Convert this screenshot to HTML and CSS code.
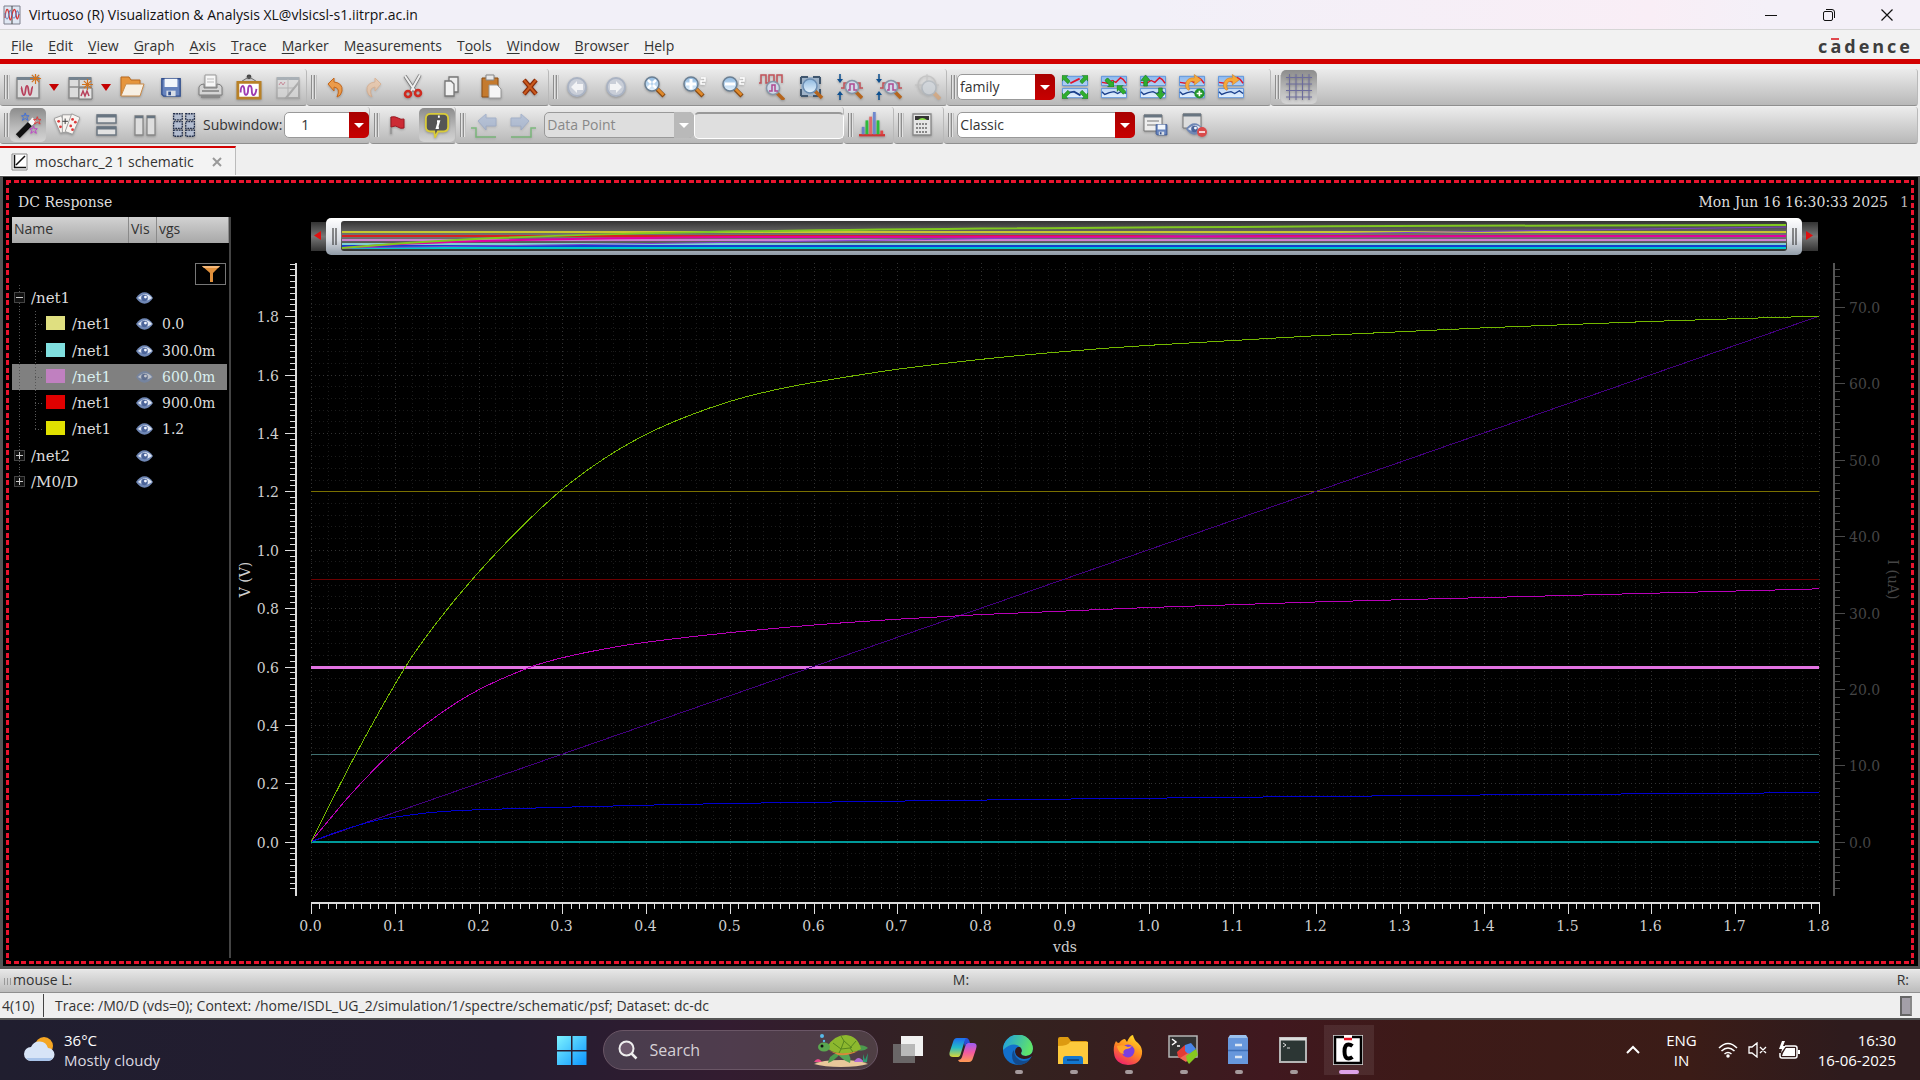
FILE: index.html
```html
<!DOCTYPE html>
<html lang="en">
<head>
<meta charset="utf-8">
<title>Virtuoso (R) Visualization &amp; Analysis XL</title>
<link rel="stylesheet" href="styles.css">
</head>
<body>
<svg class="defs" aria-hidden="true">
  <defs>
    <linearGradient id="lens" x1="0" y1="0" x2="0" y2="1"><stop offset="0" stop-color="#8fb9e0"/><stop offset="1" stop-color="#e6f3fd"/></linearGradient>
    <linearGradient id="pane" x1="0" y1="0" x2="0" y2="1"><stop offset="0" stop-color="#8db8ee"/><stop offset="1" stop-color="#e4f0fd"/></linearGradient>
    <symbol id="mag" viewBox="0 0 26 26"><path d="M15 15l7 7" stroke="#8a4a10" stroke-width="4.5"/><path d="M15.500 15l6 6" stroke="#e08a2c" stroke-width="2.500"/><circle cx="10" cy="10" r="7" fill="url(#lens)" stroke="#6b7f92" stroke-width="1.500"/></symbol>
    <symbol id="zoomaxis" viewBox="0 0 26 26"><path d="M3 0v7M3 26v-7" stroke="#0d4f8f" stroke-width="1.500"/><path d="M0 5h6l-3 4zM0 21h6l-3-4z" fill="#0d4f8f"/><path d="M4 14h3V9h16v5h3" fill="none" stroke="#c25158" stroke-width="1.500"/><path d="M18 17l7 7" stroke="#b5651d" stroke-width="3.500"/><circle cx="15" cy="13" r="6.500" fill="#cfd9e8" stroke="#8796a8" stroke-width="1.500"/><path d="M11 16h2v-6h4v6h3" fill="none" stroke="#b04a90" stroke-width="1.500"/></symbol>
    <symbol id="eye" viewBox="0 0 18 12"><path d="M0 6q4-6 9-6t9 6q-4 6-9 6T0 6z" fill="#6f87b5"/><path d="M2 6q4-4 8-4t7 4q-4 3-7 3T2 6z" fill="#dfe6f3"/><circle cx="9" cy="6" r="3.500" fill="#4c659a"/><circle cx="10" cy="5" r="1.500" fill="#f4f7ff"/></symbol>
    <symbol id="spark" viewBox="0 0 12 12"><path d="M6 0v12M0 6h12M2 2l8 8M10 2l-8 8" stroke="#d1731f" stroke-width="1.300"/></symbol>
    <symbol id="panes" viewBox="0 0 28 26"><path d="M.5 1.500h27v10H.5zM.5 14.500h27v10H.5z" fill="url(#pane)" stroke="#5c93dc"/></symbol>
    <symbol id="traces" viewBox="0 0 28 26"><use href="#panes" width="28" height="26"/><path d="M1 8l6 1 5-3 4 2 5-5 3 2 3 4" fill="none" stroke="#e0142c" stroke-width="1.500"/><path d="M1 18l3 3 5-2 5-1 4 2 5-3 4 3" fill="none" stroke="#1a3f8c" stroke-width="1.500"/></symbol>
    <symbol id="garrow" viewBox="0 0 10 10"><path d="M0 0h7L5 2l5 5-3 3-5-5-2 2z" fill="#2fae2f" stroke="#14701a" stroke-width=".6"/></symbol>
    <symbol id="disk" viewBox="0 0 24 24"><path d="M2 3h20v19H4l-2-2z" fill="#6683bd" stroke="#324f8d" stroke-width="1.500"/><path d="M5 3h14v9H5z" fill="#f2f6fb"/><path d="M7 16h10v6H7z" fill="#d7dde6"/><path d="M9 17h3v4H9z" fill="#324f8d"/></symbol>
    <symbol id="round" viewBox="0 0 26 26"><circle cx="13" cy="13" r="9" fill="#c9ced8" stroke="#aab3c3" stroke-width="2"/><path d="M7 13l6-6v3h6v6h-6v3z" fill="#f2f3f5"/></symbol>
    <symbol id="win" viewBox="0 0 26 26"><path d="M2 4h22v20H2z" fill="#dcdcdc" stroke="#8c8c8c" stroke-width="1.500"/><path d="M2 3h22v3H2z" fill="#75838f"/></symbol>
    <symbol id="loop" viewBox="0 0 20 20"><path d="M4 18Q-1 14 2 8 5 3 11 4V0l8 6-8 6V8Q6 7 5 11q-1 3 1 6z" fill="#f5a93c" stroke="#cf7b18" stroke-width=".6"/></symbol>
  </defs>
</svg>

<header class="titlebar">
  <svg width="18" height="20" viewBox="0 0 18 20"><path d="M1 1h16v18H1z" fill="#dfe7f3" stroke="#7d7f8c"/><path d="M9 1v18" stroke="#444"/><path d="M2 13c1-11 3-11 4-3s2 5 3 0 3-9 4-1 2 5 3 0" fill="none" stroke="#d53535" stroke-width="1.200"/><path d="M2 8c1 8 3 8 4 1s2-3 3 1 3 5 4-1 2-3 3 1" fill="none" stroke="#5b79b5"/></svg>
  <h1 class="titlebar-text">Virtuoso (R) Visualization &amp; Analysis XL@vlsicsl-s1.iitrpr.ac.in</h1>
  <div class="win-controls">
    <button aria-label="Minimize"><svg width="14" height="14"><path d="M1 7.500h12" stroke="#111"/></svg></button>
    <button aria-label="Restore"><svg width="14" height="14" fill="none" stroke="#111"><rect x="1.500" y="3.500" width="9" height="9" rx="1.500"/><path d="M4 1.500h6q2.500 0 2.500 2.500v6"/></svg></button>
    <button aria-label="Close"><svg width="14" height="14"><path d="M1.500 1.500l11 11m0-11l-11 11" stroke="#111" stroke-width="1.200"/></svg></button>
  </div>
</header>

<nav class="menubar">
  <button><u>F</u>ile</button><button><u>E</u>dit</button><button><u>V</u>iew</button><button><u>G</u>raph</button><button><u>A</u>xis</button><button><u>T</u>race</button><button><u>M</u>arker</button><button>M<u>e</u>asurements</button><button>T<u>o</u>ols</button><button><u>W</u>indow</button><button><u>B</u>rowser</button><button><u>H</u>elp</button>
  <span class="brand">c<span class="brand-a">a</span>dence</span>
</nav>

<div class="toolbars">
  <div class="toolbar">
    <div class="group">
      <i class="grip"></i>
      <div class="tight">
        <button class="tool" aria-label="New window"><svg viewBox="0 0 26 26"><use href="#win"/><path d="M6 13c1 0 1 8 3 8s1-9 3-9 1 9 3 9 1-8 3-8" fill="none" stroke="#b8415c" stroke-width="1.800"/><use href="#spark" x="15" y="-1" width="11" height="11"/></svg></button>
        <button class="caret" aria-label="New window options"></button>
        <button class="tool" aria-label="New subwindow"><svg viewBox="0 0 26 26"><use href="#win"/><path d="M2 13h22M12 5v19" stroke="#8c8c8c" stroke-width="1.500"/><path d="M12 14h13v11H12z" fill="#e4e4e4" stroke="#777"/><path d="M14 22l2-5 2 5 2-5 2 5" fill="none" stroke="#b8415c" stroke-width="1.500"/><use href="#spark" x="15" y="5" width="11" height="11"/></svg></button>
        <button class="caret" aria-label="New subwindow options"></button>
        <button class="tool" aria-label="Open"><svg viewBox="0 0 26 26"><path d="M2 22V3h8l2 3h9v5" fill="#e6953c" stroke="#b9691c"/><path d="M2 22l5-12h18l-4 12z" fill="#f7efe3" stroke="#c88b4b"/></svg></button>
      </div>
      <button class="tool" aria-label="Save"><svg viewBox="0 0 26 26"><use href="#disk" x="2" y="2" width="22" height="22"/></svg></button>
      <button class="tool" aria-label="Print"><svg viewBox="0 0 26 26"><path d="M8 1h11v12H8z" fill="#f7f7f7" stroke="#9a9a9a"/><path d="M10 5h7M10 8h7" stroke="#bbb"/><path d="M2 13q1-3 5-3v4h13v-4q4 0 5 3v8H2z" fill="#d4d4d4" stroke="#7d7d7d"/><path d="M4 21h19v3H4z" fill="#888"/><path d="M5 17h17" stroke="#555"/></svg></button>
      <button class="tool" aria-label="Save image"><svg viewBox="0 0 28 28"><circle cx="14" cy="3" r="2.500" fill="#444"/><path d="M6 8l8-5 8 5" fill="none" stroke="#666"/><path d="M2 9h24v17H2z" fill="#fff" stroke="#b88127" stroke-width="3"/><path d="M5 20c0-9 4-9 4-2s4 5 4-1 4-6 4 1 4 6 5-2" fill="none" stroke="#9d3bb0" stroke-width="2"/></svg></button>
      <button class="tool dim" aria-label="Edit template"><svg viewBox="0 0 26 26"><use href="#win"/><path d="M2 14h22M13 5v19" stroke="#999"/><path d="M4 11l2-3 2 3 2-3" fill="none" stroke="#b8415c"/><path d="M11 24L24 8v16z" fill="#ddd" stroke="#888" stroke-width="2"/></svg></button>
    </div>
    <div class="group">
      <i class="grip"></i>
      <button class="tool" aria-label="Undo"><svg viewBox="0 0 26 26"><path d="M6 10l6-6v4q9 1 8 9-1 5-5 6 4-9-3-10v4z" fill="#eb9b4b" stroke="#c4661a"/></svg></button>
      <button class="tool dim" aria-label="Redo"><svg viewBox="0 0 26 26"><path d="M20 10l-6-6v4q-9 1-8 9 1 5 5 6-4-9 3-10v4z" fill="#f2b988" stroke="#d6905a"/></svg></button>
      <button class="tool" aria-label="Cut"><svg viewBox="0 0 26 26"><path d="M5 2l10 15M20 1L11 17" stroke="#777" stroke-width="3.500"/><path d="M5 2l10 15M20 1L11 17" stroke="#eee" stroke-width="2"/><circle cx="8" cy="20" r="3" fill="none" stroke="#cf2a1f" stroke-width="2.500"/><circle cx="18" cy="19" r="3" fill="none" stroke="#cf2a1f" stroke-width="2.500"/></svg></button>
      <button class="tool" aria-label="Copy"><svg viewBox="0 0 26 26"><path d="M10 3h9v15h-9z" fill="#eee" stroke="#777" stroke-width="1.300"/><path d="M6 7h6l3 3v12H6z" fill="#f2f2f2" stroke="#777" stroke-width="1.300"/></svg></button>
      <button class="tool" aria-label="Paste"><svg viewBox="0 0 26 26"><path d="M4 4h16v19H4z" fill="#c47a2e" stroke="#8a4c12"/><path d="M8 1h8v5H8z" fill="#e8e8e8" stroke="#888"/><path d="M11 11h8l4 4v9H11z" fill="#f5f5f5" stroke="#999"/></svg></button>
      <button class="tool" aria-label="Delete"><svg viewBox="0 0 26 26"><path d="M7 6l12 14M19 6L7 20" stroke="#8a2b08" stroke-width="4.500"/><path d="M7 6l12 14M19 6L7 20" stroke="#c95a1e" stroke-width="2"/></svg></button>
    </div>
    <div class="group">
      <i class="grip"></i>
      <button class="tool" aria-label="Back"><svg viewBox="0 0 26 26"><use href="#round"/></svg></button>
      <button class="tool" aria-label="Forward"><svg viewBox="0 0 26 26"><use href="#round" transform="matrix(-1 0 0 1 26 0)"/></svg></button>
      <button class="tool" aria-label="Fit"><svg viewBox="0 0 26 26"><use href="#mag"/><path d="M6 6l3 3M14 6l-3 3M6 14l3-3M14 14l-3-3" stroke="#fff" stroke-width="2.500"/></svg></button>
      <button class="tool" aria-label="Zoom in by 2"><svg viewBox="0 0 26 26"><use href="#mag"/><path d="M5 10h10M10 5v10" stroke="#fff" stroke-width="3"/><path d="M20 4h4v3h-4v3h4" fill="none" stroke="#fff" stroke-width="1.500"/></svg></button>
      <button class="tool" aria-label="Zoom out by 2"><svg viewBox="0 0 26 26"><use href="#mag"/><path d="M5 10h10" stroke="#fff" stroke-width="3"/><path d="M20 4h4v3h-4v3h4" fill="none" stroke="#fff" stroke-width="1.500"/></svg></button>
      <button class="tool" aria-label="Zoom X"><svg viewBox="0 0 26 26"><path d="M0 9h2V1h5v8h3V1h5v8h3V1h5v8" fill="none" stroke="#c25158" stroke-width="1.500"/><path d="M18 19l7 7" stroke="#b5651d" stroke-width="3.500"/><circle cx="14" cy="14" r="6.500" fill="#cfd9e8" stroke="#8796a8" stroke-width="1.500"/><path d="M10 17h3v-6h3v6h3" fill="none" stroke="#b04a90" stroke-width="1.500"/></svg></button>
      <button class="tool" aria-label="Zoom area"><svg viewBox="0 0 26 26"><path d="M3 3h19v19H3z" fill="#9fb3c8" stroke="#40566e" stroke-width="2" stroke-dasharray="7 5 7 0"/><path d="M17 17l7 7" stroke="#b5651d" stroke-width="3.500"/><circle cx="12" cy="12" r="7" fill="url(#lens)" stroke="#6b8db2" stroke-width="1.500"/></svg></button>
      <button class="tool" aria-label="Zoom Y"><svg viewBox="0 0 26 26"><use href="#zoomaxis"/></svg></button>
      <button class="tool" aria-label="Zoom Y at cursor"><svg viewBox="0 0 26 26"><use href="#zoomaxis"/></svg></button>
      <button class="tool dim" aria-label="Zoom target"><svg viewBox="0 0 26 26"><path d="M18 18l7 7" stroke="#d98e4c" stroke-width="4"/><circle cx="12" cy="11" r="9" fill="none" stroke="#aaa" stroke-width="1.500"/><path d="M12 0v22M0 11h24" stroke="#aaa"/><circle cx="14" cy="14" r="7" fill="#cdd5de" stroke="#9aa5b0" stroke-width="1.500"/></svg></button>
    </div>
    <div class="group wide">
      <i class="grip"></i>
      <span class="combo combo-family"><select aria-label="Strip by"><option>family</option></select></span>
      <button class="tool" aria-label="Strip chart"><svg viewBox="0 0 28 26"><use href="#panes"/><path d="M9 9l10-5" stroke="#e0142c" stroke-width="2"/><path d="M7 19l6-1 7 4" stroke="#1a3f8c" stroke-width="2" fill="none"/><use href="#garrow" x="0" y="0" width="9" height="10"/><use href="#garrow" width="9" height="10" transform="matrix(-1 0 0 1 28 0)"/><use href="#garrow" width="9" height="10" transform="matrix(1 0 0 -1 0 26)"/><use href="#garrow" width="9" height="10" transform="matrix(-1 0 0 -1 28 26)"/></svg></button>
      <button class="tool" aria-label="Combine traces"><svg viewBox="0 0 28 26"><use href="#traces"/><use href="#garrow" width="10" height="10" transform="matrix(-1 0 0 -1 14 13)"/><use href="#garrow" x="17" y="11" width="10" height="10"/></svg></button>
      <button class="tool" aria-label="Move trace"><svg viewBox="0 0 28 26"><use href="#traces"/><path d="M6 0l5 6H8v6H4V6H1zM22 26l5-6h-3v-6h-4v6h-3z" fill="#2fae2f" stroke="#14701a" stroke-width=".6"/></svg></button>
      <button class="tool" aria-label="Reload and add"><svg viewBox="0 0 28 26"><use href="#traces"/><use href="#loop" x="6" y="-1" width="19" height="20"/><circle cx="22" cy="20" r="5.500" fill="#23962b"/><path d="M19 20h6M22 17v6" stroke="#fff" stroke-width="1.800"/></svg></button>
      <button class="tool" aria-label="Reload"><svg viewBox="0 0 28 26"><use href="#traces"/><use href="#loop" x="5" y="-1" width="19" height="20"/></svg></button>
    </div>
    <div class="group rest">
      <i class="grip"></i>
      <button class="tool on" aria-label="Toggle grid"><svg viewBox="0 0 26 26"><path d="M3.500 0v26M10 0v26M16.500 0v26M23 0v26M0 3.500h26M0 10h26M0 16.500h26M0 23h26" stroke="#6d6d9c"/></svg></button>
    </div>
  </div>

  <div class="toolbar">
    <div class="group">
      <i class="grip"></i>
      <button class="tool on" aria-label="Wizard"><svg viewBox="0 0 28 28"><path d="M3 26L19 10" stroke="#111" stroke-width="6"/><path d="M16 13l5-5" stroke="#f5f5f5" stroke-width="6"/><path d="M11 1l1 3h3l-2 2 1 3-3-2-3 2 1-3-2-2h3z" fill="none" stroke="#3c6fe0"/><path d="M24 5l1 3h3l-2 2 1 3-3-2-3 2 1-3-2-2h3z" fill="none" stroke="#e03a3a"/><path d="M20 15l1 3h3l-2 2 1 3-3-2-3 2 1-3-2-2h3z" fill="none" stroke="#c040c8"/></svg></button>
      <button class="tool" aria-label="Cards"><svg viewBox="0 0 28 26"><g fill="#f8f5f2" stroke="#999"><path d="M0 6l8-3 6 16-7 3z"/><path d="M9 2h10v19H9z"/><path d="M19 1l9 4-8 18-8-3z"/></g><g fill="#dc3b3b"><circle cx="5" cy="9" r="1.500"/><circle cx="7" cy="15" r="1.500"/><circle cx="20" cy="7" r="1.500"/><circle cx="23" cy="10" r="1.500"/><circle cx="18" cy="14" r="1.500"/><circle cx="20" cy="18" r="1.500"/></g><path d="M12 6v6M9 9h6" stroke="#333"/></svg></button>
      <button class="tool" aria-label="Horizontal layout"><svg viewBox="0 0 26 26"><path d="M4 3h19v8H4zM4 15h19v8H4z" fill="#e2e2e2" stroke="#6d7882" stroke-width="1.500"/><path d="M4 4h19M4 16h19" stroke="#687581" stroke-width="3"/></svg></button>
      <button class="tool" aria-label="Vertical layout"><svg viewBox="0 0 26 26"><path d="M3 4h8v19H3zM15 4h8v19h-8z" fill="#dedede" stroke="#888" stroke-width="1.300"/><path d="M3 5h8M15 5h8" stroke="#687581" stroke-width="2.500"/></svg></button>
      <button class="tool" aria-label="Card grid"><svg viewBox="0 0 28 30"><path d="M2 2h10v7H2zM16 2h10v7H16zM2 11h10v8H2zM16 11h10v8H16zM2 21h10v7H2zM16 21h10v7H16z" fill="#b3bdd0" stroke="#222e4a" stroke-width="1.500" stroke-dasharray="2 1"/></svg></button>
      <div class="field"><label for="subwin">Subwindow:</label><span class="combo combo-sub"><select id="subwin"><option>1</option></select></span></div>
    </div>
    <div class="group">
      <i class="grip"></i>
      <button class="tool" aria-label="Flag"><svg viewBox="0 0 26 26"><path d="M6 5v17" stroke="#999" stroke-width="2"/><path d="M6 5q4-1 7 1t6 1v9q-4 1-6-1t-7 0z" fill="#cc2b35" stroke="#9c1720"/></svg></button>
      <button class="tool on" aria-label="Info"><svg viewBox="0 0 28 28"><path d="M7 2h14q5 0 5 5v9q0 5-5 5h-6l-3 6-1-6H7q-5 0-5-5V7q0-5 5-5z" fill="#555" stroke="#d9cb3a" stroke-width="2"/><path d="M15 5h2M14 10h2l-2 7h2" stroke="#fff" stroke-width="2.500" fill="none"/></svg></button>
    </div>
    <div class="group">
      <i class="grip"></i>
      <button class="tool dim" aria-label="Previous edge"><svg viewBox="0 0 26 26"><path d="M7 9l8-7v4h10v8H15v4z" fill="#8ea6cf" stroke="#6f88b8"/><path d="M0 16h5v9h20" fill="none" stroke="#2fa52f" stroke-width="1.500"/></svg></button>
      <button class="tool dim" aria-label="Next edge"><svg viewBox="0 0 26 26"><path d="M19 9l-8-7v4H1v8h10v4z" fill="#8ea6cf" stroke="#6f88b8"/><path d="M26 16h-5v9H1" fill="none" stroke="#2fa52f" stroke-width="1.500"/></svg></button>
      <div class="pair"><span class="combo combo-point off"><select aria-label="Search type" disabled><option>Data Point</option></select></span><input class="value" type="text" aria-label="Search value" disabled></div>
    </div>
    <div class="group single">
      <i class="grip"></i>
      <button class="tool" aria-label="Histogram"><svg viewBox="0 0 28 28"><path d="M0 25h28" stroke="#d03636" stroke-width="2.500"/><path d="M3 16h3v8H3z" fill="#6b82c8"/><path d="M7 9h3v15H7z" fill="#2dbb3b"/><path d="M11 5h3v19h-3z" fill="#e06a6a"/><path d="M15 0h3v24h-3z" fill="#6f88cf"/><path d="M19 9h3v15h-3z" fill="#2dbb3b"/><path d="M23 20h3v4h-3z" fill="#e04848"/></svg></button>
    </div>
    <div class="group single">
      <i class="grip"></i>
      <button class="tool" aria-label="Calculator"><svg viewBox="0 0 26 26"><path d="M4 2h18v21H4z" fill="#e6e6e6" stroke="#888" stroke-width="1.300"/><path d="M6 4h14v4H6z" fill="#333"/><path d="M9 8q4-4 9 0z" fill="#8be04a"/><path d="M7 12h12M7 16h12M7 20h12" stroke="#888" stroke-width="2" stroke-dasharray="2 1"/></svg></button>
    </div>
    <div class="group rest">
      <i class="grip"></i>
      <span class="combo combo-classic"><select aria-label="Workspace"><option>Classic</option></select></span>
      <button class="tool" aria-label="Save workspace"><svg viewBox="0 0 26 26"><path d="M2 3h18v16H2z" fill="#eee" stroke="#777"/><path d="M2 4h18" stroke="#687581" stroke-width="3"/><path d="M5 9h12M5 13h9" stroke="#777"/><use href="#disk" x="13" y="11" width="13" height="13"/></svg></button>
      <button class="tool" aria-label="Delete workspace"><svg viewBox="0 0 26 26"><path d="M2 2h18v14H2z" fill="#ddd" stroke="#777"/><path d="M2 3h18" stroke="#687581" stroke-width="3"/><use href="#eye" x="5" y="11" width="17" height="12"/><circle cx="21" cy="20" r="5" fill="#d94a4a"/><path d="M18 20h6" stroke="#fff" stroke-width="1.500"/></svg></button>
    </div>
  </div>
</div>

<div class="tabs">
  <div class="tab">
    <svg width="17" height="18" viewBox="0 0 17 18"><path d="M1 1h15v16H1z" fill="#fff" stroke="#888"/><path d="M3.500 2v12.500H15M5 12L14 3" fill="none" stroke="#111" stroke-width="1.500"/></svg>
    <span>moscharc_2 1 schematic</span>
    <button class="tab-close" aria-label="Close tab"><svg width="10" height="10"><path d="M1 1l8 8m0-8l-8 8" stroke="#999" stroke-width="2"/></svg></button>
  </div>
</div>

<main class="graph">
  <div class="graph-frame">
    <div class="graph-head"><h2>DC Response</h2><span>Mon Jun 16 16:30:33 2025</span><span class="index">1</span></div>
    <div class="graph-body">
      <aside class="legend">
        <div class="legend-head"><span class="c-name">Name</span><span class="c-vis">Vis</span><span class="c-val">vgs</span></div>
        <button class="filter" aria-label="Filter"><svg width="18" height="16"><path d="M0 0h18l-7 7v9H8V7z" fill="#e0903c"/><path d="M0 0h18l-2 2H2z" fill="#f5b878"/></svg></button>
        <table class="tree">
          <tr><td class="t-name root"><i class="box minus"></i>/net1</td><td class="t-vis"><svg width="17" height="12"><use href="#eye"/></svg></td><td></td></tr>
          <tr><td class="t-name leaf"><i class="sw khaki"></i>/net1</td><td class="t-vis"><svg width="17" height="12"><use href="#eye"/></svg></td><td>0.0</td></tr>
          <tr><td class="t-name leaf"><i class="sw aqua"></i>/net1</td><td class="t-vis"><svg width="17" height="12"><use href="#eye"/></svg></td><td>300.0m</td></tr>
          <tr class="selected"><td class="t-name leaf"><i class="sw orchid"></i>/net1</td><td class="t-vis"><svg width="17" height="12"><use href="#eye"/></svg></td><td>600.0m</td></tr>
          <tr><td class="t-name leaf"><i class="sw red"></i>/net1</td><td class="t-vis"><svg width="17" height="12"><use href="#eye"/></svg></td><td>900.0m</td></tr>
          <tr><td class="t-name leaf last"><i class="sw yellow"></i>/net1</td><td class="t-vis"><svg width="17" height="12"><use href="#eye"/></svg></td><td>1.2</td></tr>
          <tr><td class="t-name root"><i class="box plus"></i>/net2</td><td class="t-vis"><svg width="17" height="12"><use href="#eye"/></svg></td><td></td></tr>
          <tr><td class="t-name root end"><i class="box plus"></i>/M0/D</td><td class="t-vis"><svg width="17" height="12"><use href="#eye"/></svg></td><td></td></tr>
        </table>
      </aside>
      <div class="plot"><svg id="chart" role="img" aria-label="DC response traces against vds"></svg></div>
    </div>
  </div>
</main>

<div class="mousebar"><span>mouse L:</span><span>M:</span><span>R:</span></div>
<div class="statusbar"><span class="count">4(10)</span><span class="msg">Trace: /M0/D (vds=0); Context: /home/ISDL_UG_2/simulation/1/spectre/schematic/psf; Dataset: dc-dc</span><i class="led"></i></div>

<footer class="taskbar">
  <div class="weather">
    <svg width="32" height="28" viewBox="0 0 32 28"><circle cx="20" cy="10" r="9" fill="#f5a623"/><path d="M7 25a7 7 0 0 1 0-14 9 9 0 0 1 17 1 6.500 6.500 0 0 1 0 13z" fill="#d7e4f7"/><path d="M7 25a7 7 0 0 1-5-3h27a6 6 0 0 1-5 3z" fill="#a9c4ea"/></svg>
    <div><div>36°C</div><div class="soft">Mostly cloudy</div></div>
  </div>
  <div class="apps">
    <button class="app" aria-label="Start"><svg width="30" height="30" viewBox="0 0 30 30"><defs><linearGradient id="st" x1="0" y1="0" x2="1" y2="1"><stop offset="0" stop-color="#7df3ff"/><stop offset="1" stop-color="#0a93ff"/></linearGradient></defs><path d="M0 1h14v14H0zM15.500 1h14v14h-14zM0 16.500h14v14H0zM15.500 16.500h14v14h-14z" fill="url(#st)"/></svg></button>
    <div class="search">
      <svg width="20" height="20"><circle cx="8.500" cy="8.500" r="7" fill="#6d5a6d" stroke="#eee" stroke-width="2"/><path d="M13.500 13.500l5 5" stroke="#eee" stroke-width="2.500"/></svg>
      <input type="text" placeholder="Search" aria-label="Search">
      <svg width="55" height="34" viewBox="0 0 55 34"><path d="M0 31q8-4 27-4t27 4q-10 3-27 3T0 31z" fill="#e8c79a"/><path d="M23 20q-8 2-9 10 6-2 12-9z" fill="#4c9a4e"/><path d="M22 19q6 8 14 11 2-5-3-11z" fill="#55a556"/><path d="M44 12q7 0 10 3-4 4-12 2z" fill="#4c9a4e"/><path d="M13 14Q20 2 32 2q12 1 15 14-8 5-20 4-10 0-14-6z" fill="#8db82e"/><path d="M19 10l8 6 9-1 6-7M27 16l-2 4M36 15l3 4M27 3l3 5-3 8M30 8l8 7" stroke="#56861f" fill="none"/><path d="M14 17q12 6 30 1-8 5-20 4z" fill="#d98a3a"/><ellipse cx="10" cy="14" rx="6" ry="4.500" fill="#5aa64f"/><circle cx="8" cy="13" r="1.500" fill="#111"/><circle cx="8" cy="3" r="2" fill="#57b9e8"/><circle cx="10" cy="8" r="1.200" fill="#57b9e8"/><path d="M0 29q4-6 8 0z" fill="#e84a8a"/><path d="M40 29q4-8 10 0z" fill="#b06cd0"/><path d="M49 29l0-8 2 6 3-7-1 9z" fill="#2d9a72"/></svg>
    </div>
    <button class="app" aria-label="Task view"><svg width="30" height="28" viewBox="0 0 30 28"><path d="M8 0h22v20H8z" fill="#f1f1f1"/><path d="M0 8h22v19H0z" fill="#7d7d7d" fill-opacity=".75"/><path d="M8 8h14v12H8z" fill="#b9b9b9"/></svg></button>
    <button class="app" aria-label="Copilot"><svg width="28" height="26" viewBox="0 0 28 26"><defs><linearGradient id="cp1" x1="0" y1="0" x2="0" y2="1"><stop offset="0" stop-color="#1d6df0"/><stop offset=".5" stop-color="#24b9c8"/><stop offset="1" stop-color="#d8d838"/></linearGradient><linearGradient id="cp2" x1="0" y1="0" x2="0" y2="1"><stop offset="0" stop-color="#9b5cf5"/><stop offset=".5" stop-color="#f35aa0"/><stop offset="1" stop-color="#ff9b52"/></linearGradient></defs><path d="M17 1H8Q5 1 4 5L1 14q-2 6 3 6h5q2 0 3-4l3-10q1-3 4-3-1-2-2-2z" fill="url(#cp1)"/><path d="M11 25h9q3 0 4-4l3-9q2-6-3-6h-5q-2 0-3 4l-3 10q-1 3-4 3 1 2 2 2z" fill="url(#cp2)"/><path d="M17 1q3 0 4 5h-2q-2 0-3 4l-1-4q1-4 2-5z" fill="#2a4fd8"/></svg></button>
    <button class="app run" aria-label="Edge"><svg width="30" height="30" viewBox="0 0 30 30"><defs><linearGradient id="ed" x1="0" y1="0" x2="1" y2=".3"><stop offset="0" stop-color="#1c9ae8"/><stop offset="1" stop-color="#5fe36a"/></linearGradient></defs><circle cx="15" cy="15" r="15" fill="#1370cc"/><path d="M0 15A15 15 0 0 1 30 14q0 6-7 7-5 0-5-3 2-3-1-6-7-6-17 3z" fill="url(#ed)"/><path d="M11 15q0 9 9 11 5 0 8-3-4 7-13 7Q9 28 9 20q0-3 2-5z" fill="#134a8c"/><path d="M15 12q-3 1-3 5 1 6 9 7 5 0 8-3h1q2-3 0-7 0 6-7 7-5 0-5-3 2-3-1-6z" fill="#34191c"/></svg></button>
    <button class="app run" aria-label="File Explorer"><svg width="30" height="27" viewBox="0 0 30 27"><path d="M0 2q0-2 2-2h8l3 4h15q2 0 2 2v5H0z" fill="#dd9a10"/><path d="M0 9q10 0 12-4h18v22H0z" fill="#fdc93c"/><path d="M5 27v-5q0-3 3-3h14q3 0 3 3v5z" fill="#1377cf"/><path d="M9 23h12" stroke="#0b3d78" stroke-width="1.500"/></svg></button>
    <button class="app run" aria-label="Firefox"><svg width="30" height="30" viewBox="0 0 30 30"><defs><linearGradient id="fx" x1=".8" y1="0" x2=".3" y2="1"><stop offset="0" stop-color="#ffe226"/><stop offset=".5" stop-color="#ff8a1f"/><stop offset="1" stop-color="#f0216b"/></linearGradient></defs><path d="M3 6q1 2 3 2 3-4 6-4l2 3q3-7 6-7 1 5 5 8 5 5 4 11-2 11-14 11Q2 29 1 18 0 11 3 6z" fill="url(#fx)"/><circle cx="15" cy="16" r="6.500" fill="#7a3fe0"/><path d="M4 11q6-2 11 1l4-1q-2 3-6 3-4 2-2 5-6-1-7-8z" fill="#ffa628"/></svg></button>
    <button class="app run" aria-label="MobaXterm"><svg width="30" height="30" viewBox="0 0 30 30"><path d="M1 1h28v21H1z" fill="#333" stroke="#b5b5b5" stroke-width="1.500"/><path d="M4 4l4 3-4 3M9 11h3" stroke="#fff" stroke-width="1.500" fill="none"/><path d="M9 17l8-7 4 5-4 11-7-4z" fill="#e33b35"/><path d="M17 10l6-2 5 6-7 6-4-4z" fill="#4a86e8"/><path d="M12 23l8-5 4 3-6 6z" fill="#f06a52"/><path d="M18 21l10-7 2 6-9 9-2-3z" fill="#86c91f"/></svg></button>
    <button class="app run" aria-label="File cabinet"><svg width="22" height="30" viewBox="0 0 22 30"><path d="M3 0h16l2 3H1z" fill="#9cc2ef"/><path d="M1 3h20v26H1z" fill="#6797dc"/><path d="M1 15.500h20" stroke="#3e6fb7" stroke-width="1.500"/><path d="M8 10h7M8 22h7" stroke="#dbe5f2" stroke-width="2.500"/></svg></button>
    <button class="app run" aria-label="Terminal"><svg width="28" height="26" viewBox="0 0 28 26"><path d="M1 1h26v24H1z" fill="#2c3634" stroke="#b5b5b5" stroke-width="2"/><path d="M1 2h26" stroke="#ddd" stroke-width="3"/><path d="M4 6l3 2-3 2M8 11h3" stroke="#ddd" fill="none"/></svg></button>
    <button class="app run active" aria-label="Cadence Virtuoso"><svg width="30" height="30" viewBox="0 0 30 30"><path d="M0 0h30v30H0z" fill="#ddd"/><path d="M2 2h26v26H2z" fill="#fff" stroke="#000" stroke-width="2.500"/><path d="M11 0h8v5h-8z" fill="#fff"/><path d="M11 4h8" stroke="#e81123" stroke-width="2.500"/><path d="M19.500 11q-2-1.500-4-1.500-4 0-4 7t4 7q2 0 4-1.500" fill="none" stroke="#000" stroke-width="4"/></svg></button>
  </div>
  <div class="tray">
    <button class="tray-btn" aria-label="Hidden icons"><svg width="14" height="10"><path d="M1 8l6-6 6 6" fill="none" stroke="#fff" stroke-width="2"/></svg></button>
    <div class="lang"><div>ENG</div><div>IN</div></div>
    <svg width="20" height="16" viewBox="0 0 20 16" fill="none" stroke="#fff" stroke-width="1.500"><path d="M1 6q9-9 18 0M3.500 9q6.500-6 13 0M6.500 12q3.500-3 7 0"/><circle cx="10" cy="14" r="1" fill="#fff"/></svg>
    <svg width="20" height="16" viewBox="0 0 20 16" fill="none" stroke="#fff" stroke-width="1.300"><path d="M1 5h3l5-4v14l-5-4H1zM12 5l6 6m0-6l-6 6"/></svg>
    <svg width="22" height="18" viewBox="0 0 22 18"><path d="M7 5h10q2 0 2 2v8q0 2-2 2H4q-2 0-2-2v-3" fill="none" stroke="#fff" stroke-width="1.500"/><path d="M8 7h9v8H4l1-3z" fill="#fff"/><path d="M20 9h2v4h-2z" fill="#fff"/><path d="M4 0L1 8h3l-1 4 5-7H5l2-5z" fill="#fff"/></svg>
    <div class="clock"><div>16:30</div><div>16-06-2025</div></div>
  </div>
</footer>
<script src="script.js"></script>
</body>
</html>
```
FILE: styles.css
```css
* { box-sizing: border-box; }
body {
  margin: 0;
  min-height: 100vh;
  display: flex;
  flex-direction: column;
  background: #efefef;
  color: #333;
  font: 14px/18px "Open Sans", "Noto Sans", sans-serif;
}
button { border: 0; padding: 0; background: none; color: inherit; font: inherit; }
h1, h2 { margin: 0; font: inherit; }
svg { display: block; flex: none; }
.defs { position: absolute; width: 0; height: 0; }

.titlebar {
  height: 29px;
  display: flex;
  align-items: center;
  gap: 8px;
  padding: 0 4px 0 3px;
  background: linear-gradient(90deg, #f2f0f8 0, #f2f0f8 60%, #f9eef6 86%, #f4f0f8 92%);
  color: #111;
}
.titlebar-text { flex: 1; }
.win-controls { display: flex; }
.win-controls button { width: 58px; height: 29px; display: grid; place-items: center; }

.menubar {
  height: 35px;
  display: flex;
  align-items: center;
  gap: 15px;
  padding: 2px 7px 0 11px;
  background: #f2f2f2;
  border-top: 1px solid #d6d6d6;
  border-bottom: 5px solid #d20000;
}
.menubar u { text-underline-offset: 2px; }
.brand {
  margin-left: auto;
  font: bold 18px/24px "Open Sans", sans-serif;
  letter-spacing: 3px;
  color: #3d3d3d;
}
.brand-a { background: linear-gradient(#e0484e, #e0484e) 1px 4px / 8px 2px no-repeat; }

.toolbars { padding: 5px 2px 0 0; }
.toolbar { display: flex; height: 37px; }
.toolbar + .toolbar { margin-top: 1px; }
.group {
  display: flex;
  align-items: center;
  gap: 9px;
  height: 37px;
  padding: 0 3px 0 4px;
  border-right: 1px solid #b9b9b9;
  border-bottom: 1px solid #8f8f8f;
  border-radius: 3px;
  background: linear-gradient(#ececec, #b8b8b8);
}
.group.wide { padding-right: 24px; }
.group.single { padding-right: 6px; }
.group.rest { flex: 1; }
.grip {
  width: 6px;
  height: 24px;
  margin-right: -6px;
  background: repeating-linear-gradient(90deg, #8d8d8d 0 1px, #e3e3e3 1px 2px, #c4c4c4 2px 3px);
}
.tight { display: flex; align-items: center; }
.tool { width: 30px; height: 34px; display: grid; place-items: center; }
.tool svg { width: 26px; height: 26px; filter: drop-shadow(0 1px 1px rgba(0,0,0,.25)); }
.dim { opacity: .5; }
.on { width: 36px; margin: 0 -3px; background: linear-gradient(#8c8c8c, #bdbdbd 60%, #d4d4d4); border-radius: 5px; }
.caret { width: 22px; height: 24px; display: grid; place-items: center; }
.caret::after { content: ""; border: 5px solid transparent; border-top: 7px solid #c40000; border-bottom: 0; }

.combo { position: relative; height: 26px; }
.combo::before {
  content: "";
  position: absolute;
  right: 0;
  top: 0;
  width: 20px;
  height: 26px;
  border-radius: 0 5px 5px 0;
  background: linear-gradient(#a80000, #c80000);
  pointer-events: none;
}
.combo::after {
  content: "";
  position: absolute;
  right: 5px;
  top: 11px;
  border: 5px solid transparent;
  border-top-color: #fff;
  border-bottom: 0;
  pointer-events: none;
}
.combo select {
  appearance: none;
  width: 100%;
  height: 26px;
  padding: 0 24px 0 2px;
  border: 1px solid #999;
  border-radius: 5px;
  background: #fff;
  color: #333;
  font: 14px/18px "Open Sans", "Noto Sans", sans-serif;
}
.combo-family { width: 98px; margin: 0 -4px 0 -3px; }
.combo-classic { width: 178px; margin-right: -4px; }
.combo-sub { width: 85px; }
.combo.combo-sub select { padding-left: 16px; }
.combo-point { width: 150px; }
.combo.off select { background: #dedede; color: #888; opacity: 1; }
.combo.off::before { background: #b9b9b9; }
.field { display: flex; align-items: center; gap: 2px; margin: 0 -3px 0 -5px; }
.pair { display: flex; margin: 0 -4px 0 -3px; }
.value { width: 150px; height: 27px; border: 1px solid #fff; border-top: 2px solid #999; border-radius: 5px; background: #dfdfdf; }

.tabs { height: 32px; padding-top: 2px; border-bottom: 1px solid #fff; }
.tab {
  width: 236px;
  height: 29px;
  display: flex;
  align-items: center;
  gap: 7px;
  padding: 0 13px 0 11px;
  border-top: 2px solid #d20000;
  border-right: 1px solid #bbb;
  background: #f3f3f3;
}
.tab-close { margin-left: auto; }

.graph {
  flex: 1;
  display: flex;
  min-height: 420px;
  padding: 3px 4px 2px 3px;
  background: #000;
  border: solid #555;
  border-width: 1px 2px 3px 3px;
}
.graph-frame {
  --dash: #e8142e 0 5px, transparent 5px 8px, #e8142e 8px 13px, transparent 13px 15px;
  flex: 1;
  display: flex;
  flex-direction: column;
  min-width: 0;
  padding: 7px 6px 6px;
  background:
    repeating-linear-gradient(90deg, var(--dash)) 0 0 / 100% 3px no-repeat,
    repeating-linear-gradient(90deg, var(--dash)) 0 100% / 100% 3px no-repeat,
    repeating-linear-gradient(var(--dash)) 0 0 / 3px 100% no-repeat,
    repeating-linear-gradient(var(--dash)) 100% 0 / 3px 100% no-repeat;
  color: #dcdcdc;
  font: 14px/20px "DejaVu Serif", "Liberation Serif", serif;
}
.graph-head { display: flex; gap: 12px; height: 30px; padding: 5px 0 0 6px; }
.graph-head h2 { flex: 1; }
.graph-head .index { width: 8px; color: #b5b5b5; }
.graph-body { flex: 1; display: flex; min-height: 0; }
.legend { width: 219px; flex: none; border-right: 2px solid #444; }
.legend-head {
  display: flex;
  height: 26px;
  background: linear-gradient(#d2d2d2, #a8a8a8);
  color: #333;
  font: 14px/24px "Open Sans", "Noto Sans", sans-serif;
}
.legend-head span { padding-left: 2px; border-right: 1px solid #8a8a8a; }
.c-name { width: 117px; }
.c-vis { width: 28px; }
.c-val { flex: 1; }
.filter { display: grid; place-items: center; width: 31px; height: 22px; margin: 20px 3px 0 auto; border: 1px solid #777; }
.tree { width: 215px; height: 210px; border-collapse: collapse; color: #dcdcdc; }
.tree td { padding: 0; line-height: 20px; white-space: nowrap; }
.t-name { width: 120px; font-size: 15px; background: repeating-linear-gradient(#555 0 1px, transparent 1px 3px) 7px 0 / 1px 100% no-repeat; }
.t-name.end { background-size: 1px 8px; }
.tree .leaf {
  padding-left: 34px;
  background:
    repeating-linear-gradient(#555 0 1px, transparent 1px 3px) 7px 0 / 1px 100% no-repeat,
    repeating-linear-gradient(#555 0 1px, transparent 1px 3px) 23px 0 / 1px 100% no-repeat,
    repeating-linear-gradient(90deg, #555 0 1px, transparent 1px 3px) 23px 13px / 7px 1px no-repeat;
}
.tree .last { background-size: 1px 100%, 1px 13px, 7px 1px; }
.box {
  display: inline-block;
  width: 11px;
  height: 11px;
  margin: 0 6px 0 2px;
  border: 1px solid #444;
  background: linear-gradient(#ccc, #ccc) center / 7px 1px no-repeat, #111;
}
.box.plus { background: linear-gradient(#ccc, #ccc) center / 7px 1px no-repeat, linear-gradient(#ccc, #ccc) center / 1px 7px no-repeat, #111; }
.t-vis { width: 30px; }
.t-vis svg { margin-left: 4px; }
.selected { background-color: #808080; }
.tree .selected td { color: #d9efef; }
.selected svg { opacity: .6; }
.sw { display: inline-block; width: 19px; height: 14px; margin-right: 7px; vertical-align: -1px; }
.khaki { background: #dfdf80; }
.aqua { background: #80dfdf; }
.orchid { background: #c080c0; }
.red { background: #e00000; }
.yellow { background: #e0e000; }

.plot { flex: 1; display: flex; min-width: 0; }
.plot svg { width: 100%; height: 100%; font: 14px "DejaVu Serif", "Liberation Serif", serif; }
.axis-l { stroke: #dcdcdc; stroke-width: 2; shape-rendering: crispEdges; fill: none; }
.axis-r { stroke: #555; stroke-width: 2; shape-rendering: crispEdges; fill: none; }
.tick-l { stroke: #e0e0e0; stroke-width: 1; shape-rendering: crispEdges; fill: none; }
.tick-r { stroke: #4a4a4a; stroke-width: 1; shape-rendering: crispEdges; fill: none; }
.grid-minor { stroke: #1c1c1c; stroke-dasharray: 1 3; shape-rendering: crispEdges; }
.grid-major { stroke: #333; stroke-dasharray: 1 3; shape-rendering: crispEdges; }
.lab { fill: #cfcfcf; }
.lab-dim { fill: #454545; }
.trace { fill: none; shape-rendering: crispEdges; }

.mousebar {
  display: grid;
  grid-template-columns: 1fr auto 1fr;
  height: 23px;
  padding: 0 11px 0 13px;
  margin-top: 1px;
  border-bottom: 1px solid #8f8f8f;
  background:
    repeating-linear-gradient(90deg, #999 0 1px, transparent 1px 3px) 4px 8px / 7px 7px no-repeat,
    linear-gradient(#e6e6e6, #bcbcbc);
  line-height: 20px;
}
.mousebar span:last-child { text-align: right; }
.statusbar {
  display: flex;
  align-items: center;
  height: 27px;
  padding: 0 8px 0 2px;
  border-bottom: 2px solid #555;
}
.count { width: 42px; border-right: 1px solid #444; line-height: 23px; }
.msg { flex: 1; padding-left: 11px; }
.led { width: 12px; height: 20px; border: 2px solid #666; border-right-color: #888; background: #a39fa8; }

.taskbar {
  display: grid;
  grid-template-columns: 1fr auto 1fr;
  align-items: center;
  height: 60px;
  padding: 0 24px;
  background: linear-gradient(90deg, #201e2f 0, #241c30 26%, #331c30 38%, #33231f 51%, #35201f 56%, #40181f 66%, #3d1a18 74%, #3b1c17 88%, #2e1b1d 96%);
  color: #fff;
  font: 15px/20px "Open Sans", "Noto Sans", sans-serif;
}
.weather { display: flex; align-items: center; gap: 8px; }
.soft { color: #dcd9e0; }
.apps { display: flex; align-items: center; }
.app {
  position: relative;
  width: 55px;
  height: 50px;
  display: grid;
  place-items: center;
}
.run::after {
  content: "";
  position: absolute;
  bottom: 1px;
  left: 24px;
  width: 8px;
  height: 4px;
  border-radius: 2px;
  background: #a59a9c;
}
.active { background: linear-gradient(rgba(255,255,255,.08), rgba(255,255,255,.08)) 3px 0 / 50px 50px no-repeat; }
.active::after { left: 18px; width: 20px; background: #dda2e8; }
.search {
  display: flex;
  align-items: center;
  gap: 12px;
  width: 275px;
  height: 40px;
  margin: 0 3px;
  padding: 0 8px 0 14px;
  border: 1px solid #6a5666;
  border-radius: 20px;
  background: rgba(255,255,255,.14);
}
.search input { flex: 1; min-width: 0; border: 0; padding: 0; background: none; color: #ddd; font: 16px/22px "Open Sans", "Noto Sans", sans-serif; }
.search input::placeholder { color: #d6d0d6; opacity: 1; }
.tray { display: flex; align-items: center; justify-content: flex-end; gap: 10px; }
.tray-btn { margin-right: 16px; }
.lang { margin-right: 11px; text-align: center; }
.clock { margin-left: 8px; text-align: right; }
```
FILE: script.js
```js
const NS = 'http://www.w3.org/2000/svg';
const chart = document.getElementById('chart');

function add(name, attrs, text) {
  const el = document.createElementNS(NS, name);
  for (const key in attrs) el.setAttribute(key, attrs[key]);
  if (text !== undefined) el.textContent = text;
  chart.appendChild(el);
  return el;
}

// Trace samples: [vds, volts]
const GREEN = [[0,0],[.054,.302],[.113,.6],[.15,.75],[.193,.9],[.245,1.06],[.298,1.202],[.35,1.312],[.4,1.395],[.45,1.458],[.5,1.508],[.55,1.545],[.6,1.573],[.7,1.618],[.8,1.652],[.9,1.679],[1,1.7],[1.2,1.733],[1.4,1.76],[1.6,1.782],[1.8,1.8]];
const PINK = [[0,0],[.05,.17],[.098,.31],[.15,.43],[.2,.52],[.262,.598],[.3,.63],[.35,.66],[.4,.683],[.5,.716],[.6,.742],[.7,.762],[.8,.778],[1,.802],[1.2,.821],[1.4,.836],[1.6,.851],[1.8,.866]];
const BLUE = [[0,0],[.04,.042],[.078,.073],[.1,.084],[.14,.099],[.18,.107],[.24,.113],[.3,.118],[.4,.125],[.5,.131],[.7,.139],[.9,.146],[1.1,.152],[1.4,.16],[1.8,.168]];

function draw() {
  const W = chart.clientWidth, H = chart.clientHeight;
  chart.replaceChildren();
  const left = 80, right = W - 89, top = 46, bottom = H - 62, axisY = H - 55;
  const X = v => left + v / 1.8 * (right - left);
  const perVolt = (bottom - top) / 2.168;
  const Y = v => bottom - (v + 0.186) * perVolt;
  const rx = right + 15, lx = 65;
  const snap = n => Math.round(n) + 0.5;

  let minor = '', major = '';
  for (let i = 0; i <= 90; i++) {
    const d = `M${snap(X(i / 50))} ${top}V${bottom}`;
    if (i % 5 === 0) major += d; else minor += d;
  }
  for (let i = -4; i <= 49; i++) {
    const d = `M${left} ${snap(Y(i / 25))}H${right}`;
    if (i % 5 === 0) major += d; else minor += d;
  }
  add('path', {d: minor, class: 'grid-minor'});
  add('path', {d: major, class: 'grid-major'});

  let ticks = '';
  for (let i = -8; i <= 99; i++) {
    const y = snap(Y(i / 50));
    ticks += `M${lx} ${y}h${i % 10 === 0 ? -11 : -6}`;
    if (i % 10 === 0 && i >= 0) add('text', {x: 48, y: y + 5, class: 'lab', 'text-anchor': 'end'}, (i / 50).toFixed(1));
  }
  for (let i = 0; i <= 180; i++) {
    const x = snap(X(i / 100));
    ticks += `M${x} ${axisY}v${i % 10 === 0 ? 11 : 6}`;
    if (i % 10 === 0) add('text', {x: x - 1, y: axisY + 28, class: 'lab', 'text-anchor': 'middle'}, (i / 100).toFixed(1));
  }
  add('path', {d: ticks, class: 'tick-l'});
  add('path', {d: `M${lx} ${top}V${bottom}M${left} ${axisY}H${right + 1}`, class: 'axis-l'});

  let rticks = '';
  const perUnit = (Y(0) - Y(1.8)) / 525 * 7.63;
  for (let i = -6; i <= 75; i++) {
    const y = snap(Y(0) - i * perUnit);
    rticks += `M${rx} ${y}h${i % 10 === 0 ? 11 : 6}`;
    if (i % 10 === 0) add('text', {x: rx + 15, y: y + 5, class: 'lab-dim'}, i.toFixed(1));
  }
  add('path', {d: rticks, class: 'tick-r'});
  add('path', {d: `M${rx} ${top}V${bottom}`, class: 'axis-r'});

  const mid = (top + bottom) / 2;
  add('text', {transform: `translate(19 ${mid}) rotate(-90)`, class: 'lab', 'text-anchor': 'middle'}, 'V (V)');
  add('text', {transform: `translate(${W - 20} ${mid}) rotate(90)`, class: 'lab-dim', 'text-anchor': 'middle'}, 'I (uA)');
  add('text', {x: (left + right) / 2, y: axisY + 49, class: 'lab', 'text-anchor': 'middle'}, 'vds');

  const level = (v, color, w) => add('path', {d: `M${left} ${Math.round(Y(v)) + (w % 2 ? 0.5 : 0)}H${right}`, stroke: color, 'stroke-width': w, class: 'trace'});
  level(1.2, '#7a7000', 1);
  level(0.9, '#6a0000', 1);
  level(0.3, '#407070', 1);
  level(0, '#009a9a', 2);
  level(0.6, '#e273e2', 3);

  const curve = (pts, color) => {
    const p = pts.map(([a, b]) => [X(a), Y(b)]);
    let d = `M${p[0]}`;
    for (let i = 0; i < p.length - 1; i++) {
      const a = p[i - 1] || p[i], b = p[i], c = p[i + 1], e = p[i + 2] || c;
      const h = (c[0] - b[0]) / 3;
      const s1 = (c[1] - a[1]) / (c[0] - a[0]), s2 = (e[1] - b[1]) / (e[0] - b[0]);
      d += `C${b[0] + h} ${b[1] + s1 * h} ${c[0] - h} ${c[1] - s2 * h} ${c}`;
    }
    add('path', {d, stroke: color, 'stroke-width': 1, class: 'trace'});
  };
  curve([[0, 0], [1.8, 1.8]], '#430080');
  curve(BLUE, '#0000d0');
  curve(PINK, '#b800b8');
  curve(GREEN, '#74b800');

  // Pan and zoom strip above the plot
  chart.insertAdjacentHTML('beforeend', `<defs>
    <linearGradient id="track" x2="0" y2="1"><stop stop-color="#333"/><stop offset=".5" stop-color="#777"/><stop offset="1" stop-color="#333"/></linearGradient>
    <linearGradient id="knob" x2="0" y2="1"><stop stop-color="#fff"/><stop offset=".6" stop-color="#d8dce2"/><stop offset="1" stop-color="#8f9aa6"/></linearGradient></defs>`);
  const R = right - 1;
  add('rect', {x: left, y: 5, width: R - left, height: 29, fill: 'url(#track)'});
  add('rect', {x: left + 15, y: 1, width: R - left - 31, height: 37, rx: 5, fill: 'url(#knob)'});
  add('rect', {x: left + 30, y: 4, width: R - left - 61, height: 30, rx: 3, fill: 'url(#track)'});
  const a = left + 31, b = R - 32;
  const bars = [['#c8c830', 15], ['#d82020', 19], ['#d080d0', 23], ['#80d0d0', 27], ['#1040d0', 29], ['#00c8c8', 31]];
  for (const [color, y] of bars) add('path', {d: `M${a} ${y}H${b}`, stroke: color, 'stroke-width': 2});
  add('path', {d: `M${a} 31L${b} 10`, stroke: '#8040d0', fill: 'none'});
  add('path', {d: `M${a} 31Q${a + 100} 22 ${a + 400} 20T${b} 19`, stroke: '#e000a0', 'stroke-width': 2, fill: 'none'});
  add('path', {d: `M${a} 31C${a + 150} 18 ${a + 300} 10 ${b} 8`, stroke: '#80c820', 'stroke-width': 2, fill: 'none'});
  add('path', {d: `M${left + 22} 11v17M${left + 25} 11v17M${R - 25} 11v17M${R - 22} 11v17`, stroke: '#222', 'stroke-width': 1});
  add('path', {d: `M${left + 10} 14v9l-7-4.500zM${R - 12} 14v9l7-4.500z`, fill: '#e01010'});
}

draw();
window.addEventListener('resize', draw);
```
